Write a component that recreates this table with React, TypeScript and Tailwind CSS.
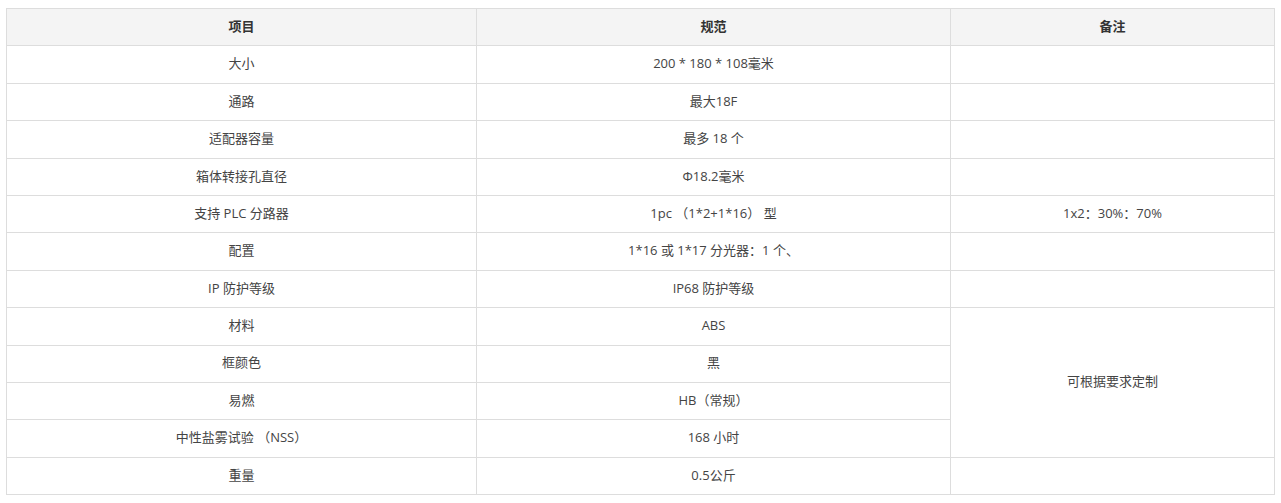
type Row = { item: string; spec: string; note?: string; noteSpan?: number; skipNote?: boolean };

const rows: Row[] = [
  { item: "大小", spec: "200 * 180 * 108毫米", note: "" },
  { item: "通路", spec: "最大18F", note: "" },
  { item: "适配器容量", spec: "最多 18 个", note: "" },
  { item: "箱体转接孔直径", spec: "Φ18.2毫米", note: "" },
  { item: "支持 PLC 分路器", spec: "1pc （1*2+1*16） 型", note: "1x2：30%：70%" },
  { item: "配置", spec: "1*16 或 1*17 分光器：1 个、", note: "" },
  { item: "IP 防护等级", spec: "IP68 防护等级", note: "" },
  { item: "材料", spec: "ABS", note: "可根据要求定制", noteSpan: 4 },
  { item: "框颜色", spec: "黑", skipNote: true },
  { item: "易燃", spec: "HB（常规）", skipNote: true },
  { item: "中性盐雾试验 （NSS）", spec: "168 小时", skipNote: true },
  { item: "重量", spec: "0.5公斤", note: "" },
];

const cell = "border border-[#dddddd] text-center align-middle px-2 pb-[1px]";

export default function App() {
  return (
    <div className="bg-white px-[6px] pt-[8px] pb-[8px] font-['Open_Sans','Noto_Sans_CJK_SC',sans-serif] text-[13px] text-[#444]">
      <table className="w-[1268px] border-collapse table-fixed">
        <colgroup>
          <col className="w-[470px]" />
          <col className="w-[474px]" />
          <col className="w-[324px]" />
        </colgroup>
        <thead>
          <tr className="h-[37.4px] bg-[#f4f4f4] font-bold text-[#333]">
            <th className={cell}>项目</th>
            <th className={cell}>规范</th>
            <th className={cell}>备注</th>
          </tr>
        </thead>
        <tbody>
          {rows.map((r) => (
            <tr key={r.item} className="h-[37.4px]">
              <td className={cell}>{r.item}</td>
              <td className={cell}>{r.spec}</td>
              {!r.skipNote && (
                <td className={cell} rowSpan={r.noteSpan ?? 1}>
                  {r.note}
                </td>
              )}
            </tr>
          ))}
        </tbody>
      </table>
    </div>
  );
}
